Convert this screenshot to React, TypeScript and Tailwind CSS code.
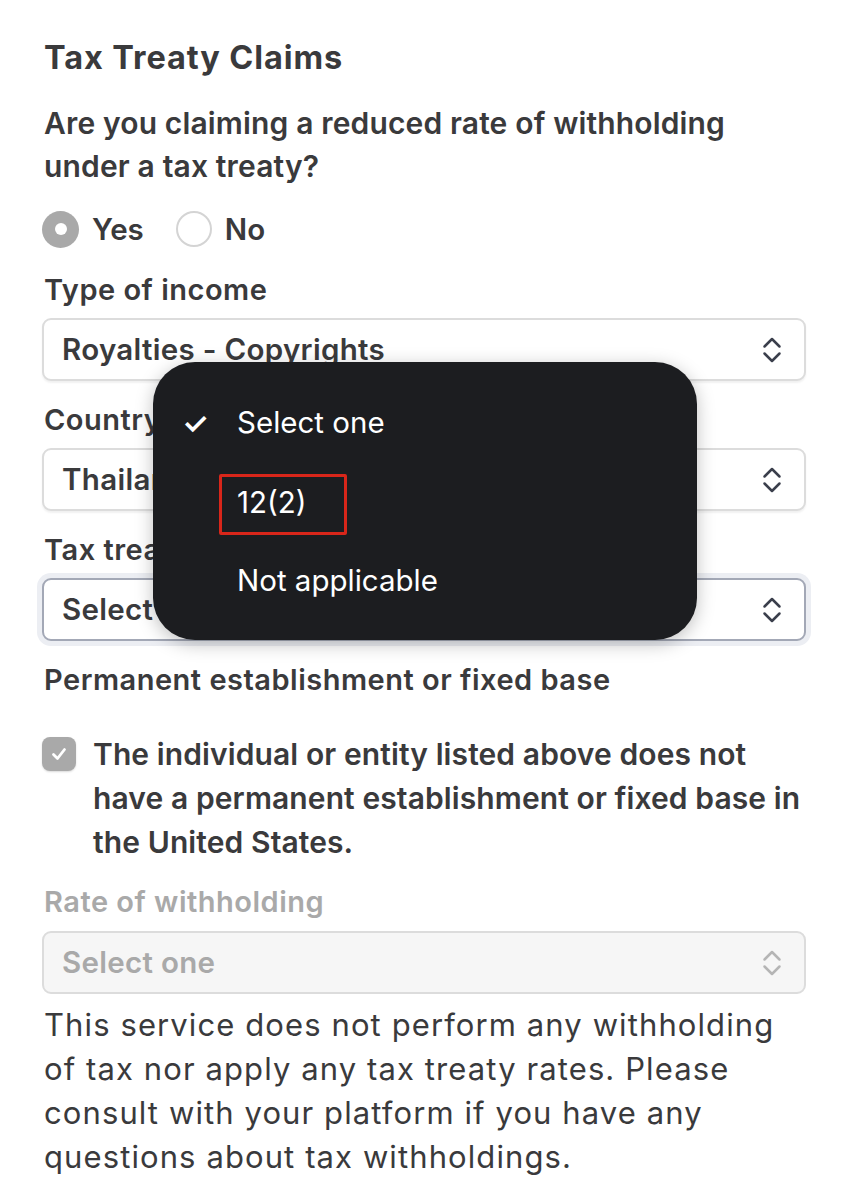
import React from "react";

const font = { fontFamily: "Inter, 'Noto Sans', sans-serif" };

function Chevrons({ muted }: { muted?: boolean }) {
  return (
    <svg width="20" height="30" viewBox="0 0 20 30" fill="none" className="shrink-0">
      <path
        d="M2.5 11.5 L10 4 L17.5 11.5 M2.5 18.5 L10 26 L17.5 18.5"
        stroke={muted ? "#b5b5b5" : "#3b3f4c"}
        strokeWidth="2.5"
        strokeLinecap="round"
        strokeLinejoin="round"
      />
    </svg>
  );
}

function SelectBox({
  value,
  focused,
  disabled,
}: {
  value: string;
  focused?: boolean;
  disabled?: boolean;
}) {
  return (
    <div
      className={`h-[63px] rounded-[9px] flex items-center justify-between pl-[18px] pr-[22px] border-2 ${
        disabled
          ? "bg-[#f6f6f6] border-[#dcdcdc] text-[#a9a9a9]"
          : focused
          ? "bg-white border-[#a3a8b6] shadow-[0_0_0_5px_#eceef3] text-[#3a3a3c]"
          : "bg-white border-[#dcdcdc] shadow-[0_2px_2px_rgba(0,0,0,0.06)] text-[#3a3a3c]"
      }`}
    >
      <span className="text-[29.5px] font-semibold leading-none tracking-[0.3px]">{value}</span>
      <Chevrons muted={disabled} />
    </div>
  );
}

function Label({ children, muted }: { children: React.ReactNode; muted?: boolean }) {
  return (
    <div
      className={`text-[29px] leading-[44px] font-semibold tracking-[0.5px] ${
        muted ? "text-[#a9a9a9]" : "text-[#3a3a3c]"
      }`}
    >
      {children}
    </div>
  );
}

export default function App() {
  return (
    <div className="relative w-[849px] h-[1200px] bg-white overflow-hidden" style={font}>
      <div className="flex flex-col pl-[42px] pr-[43px] pt-[36px] text-[#3a3a3c]">
        <h2 className="text-[32.5px] leading-[44px] font-bold tracking-[0.9px] pl-[2px]">
          Tax Treaty Claims
        </h2>

        <p className="mt-[22px] text-[30px] leading-[43px] font-semibold tracking-[0.15px] whitespace-nowrap pl-[2px]">
          Are you claiming a reduced rate of withholding
          <br />
          under a tax treaty?
        </p>

        {/* Yes / No radios */}
        <div className="mt-[19px] h-[44px] flex items-center">
          <span className="w-[37px] h-[37px] rounded-full bg-[#a9a9a9] flex items-center justify-center">
            <span className="w-[12px] h-[12px] rounded-full bg-white" />
          </span>
          <span className="ml-[13px] text-[29.5px] font-semibold">Yes</span>
          <span className="ml-[32px] w-[36px] h-[36px] rounded-full border-2 border-[#d4d4d4] bg-white" />
          <span className="ml-[13px] text-[29.5px] font-semibold">No</span>
        </div>

        <div className="mt-[17px] pl-[2px]">
          <Label>Type of income</Label>
        </div>
        <div className="mt-[6px]">
          <SelectBox value="Royalties - Copyrights" />
        </div>

        <div className="mt-[17px] pl-[2px]">
          <Label>Country</Label>
        </div>
        <div className="mt-[6px]">
          <SelectBox value="Thailand" />
        </div>

        <div className="mt-[17px] pl-[2px]">
          <Label>Tax treaty article</Label>
        </div>
        <div className="mt-[6px]">
          <SelectBox value="Select one" focused />
        </div>

        <div className="mt-[17px] pl-[2px]">
          <Label>Permanent establishment or fixed base</Label>
        </div>

        {/* checkbox */}
        <div className="mt-[30px] flex items-start">
          <span className="mt-[5px] w-[34px] h-[34px] rounded-[8px] bg-[#a9a9a9] flex items-center justify-center shrink-0 shadow-[0_1px_2px_rgba(0,0,0,0.15)]">
            <svg width="20" height="20" viewBox="0 0 20 20" fill="none">
              <path
                d="M4.5 10.5 L8.5 14.5 L15.5 5.5"
                stroke="white"
                strokeWidth="2.8"
                strokeLinecap="round"
                strokeLinejoin="round"
              />
            </svg>
          </span>
          <p className="ml-[17px] text-[30px] leading-[44px] font-semibold tracking-[0.1px] whitespace-nowrap">
            The individual or entity listed above does not
            <br />
            have a permanent establishment or fixed base in
            <br />
            the United States.
          </p>
        </div>

        <div className="mt-[16px] pl-[2px]">
          <Label muted>Rate of withholding</Label>
        </div>
        <div className="mt-[7px]">
          <SelectBox value="Select one" disabled />
        </div>

        <p className="mt-[9px] text-[31px] leading-[44px] font-normal tracking-[1.1px] whitespace-nowrap pl-[2px]">
          This service does not perform any withholding
          <br />
          of tax nor apply any tax treaty rates. Please
          <br />
          consult with your platform if you have any
          <br />
          questions about tax withholdings.
        </p>
      </div>

      {/* native picker popup */}
      <div className="absolute left-[153px] top-[362px] w-[544px] h-[278px] rounded-[42px] bg-[#1c1d20] shadow-[0_4px_18px_rgba(0,0,0,0.25)] text-white flex flex-col">
        <div className="mt-[39px] h-[44px] flex items-center">
          <span className="w-[84px] pl-[29px] text-[30px] leading-none font-semibold">✓</span>
          <span className="text-[29.5px] leading-none">Select one</span>
        </div>
        <div className="mt-[36px] h-[44px] flex items-center">
          <span className="w-[84px]" />
          <span className="text-[29.5px] leading-none">12(2)</span>
        </div>
        <div className="mt-[34px] h-[44px] flex items-center">
          <span className="w-[84px]" />
          <span className="text-[29.5px] leading-none">Not applicable</span>
        </div>
        {/* red highlight box */}
        <div className="absolute left-[66px] top-[112px] w-[128px] h-[61px] border-[3px] border-[#d8261a] rounded-[2px]" />
      </div>
    </div>
  );
}
